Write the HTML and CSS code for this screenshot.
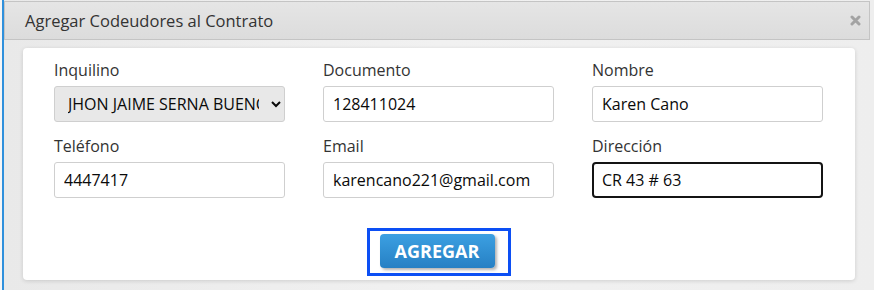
FILE: index.html
```html
<!DOCTYPE html>
<html lang="es">
<head>
    <meta charset="UTF-8">
    <meta name="viewport" content="width=device-width, initial-scale=1.0">
    <title>Agregar Codeudores</title>
    <link rel="stylesheet" href="styles.css">
</head>
<body>
    <div class="screen">
        <div class="dialog">
            <div class="dialog-header">
                <span class="dialog-title">Agregar Codeudores al Contrato</span>
                <span class="dialog-close">
                    <svg width="11" height="11" viewBox="0 0 11 11">
                        <path d="M2 2 L9 9 M9 2 L2 9" stroke="#a3a3a3" stroke-width="3" stroke-linecap="round"/>
                    </svg>
                </span>
            </div>

            <div class="dialog-body">
                <form class="card">
                    <div class="fields">
                        <div class="field">
                            <label>Inquilino</label>
                            <select class="control select">
                                <option>JHON JAIME SERNA BUENO</option>
                            </select>
                        </div>
                        <div class="field">
                            <label>Documento</label>
                            <input class="control" type="text" value="128411024">
                        </div>
                        <div class="field">
                            <label>Nombre</label>
                            <input class="control" type="text" value="Karen Cano">
                        </div>
                        <div class="field">
                            <label>Teléfono</label>
                            <input class="control" type="text" value="4447417">
                        </div>
                        <div class="field">
                            <label>Email</label>
                            <input class="control" type="text" value="karencano221@gmail.com">
                        </div>
                        <div class="field">
                            <label>Dirección</label>
                            <input class="control focused" type="text" value="CR 43 # 63">
                        </div>
                    </div>

                    <div class="actions">
                        <div class="focus-ring">
                            <button type="button" class="btn-primary">AGREGAR</button>
                        </div>
                    </div>
                </form>
            </div>
        </div>
    </div>
</body>
</html>
```

FILE: styles.css
```css
* {
    margin: 0;
    padding: 0;
    box-sizing: border-box;
    font-family: 'Open Sans', 'DejaVu Sans', sans-serif;
}

body {
    background-color: #f6f6f6;
    overflow: hidden;
}

.screen {
    height: 290px;
    padding-left: 2px;
}

/* Dialog */
.dialog {
    height: 100%;
    border-left: 2px solid #2f90dc;
    background: linear-gradient(90deg, #e9e9e9, #f1f1f1 50%, #eeeeee);
    padding-top: 1px;
}

.dialog-header {
    height: 39px;
    margin-right: 4px;
    border: 1px solid #c4c4c4;
    background: linear-gradient(#e5e5e5, #dcdcdc);
    display: flex;
    align-items: center;
    justify-content: space-between;
    padding: 0 8px 0 20px;
}

.dialog-title {
    font-size: 16.5px;
    color: #333;
}

.dialog-close {
    display: flex;
}

.dialog-body {
    padding: 8px 19px 10px 19px;
}

.card {
    background: #fff;
    border-radius: 4px;
    box-shadow: 0 1px 4px rgba(0, 0, 0, 0.14);
    padding: 12px 32px 4px 31px;
}

.fields {
    display: grid;
    grid-template-columns: repeat(3, 1fr);
    column-gap: 38px;
    row-gap: 14px;
}

.field label {
    display: block;
    font-size: 16px;
    line-height: 20px;
    color: #333;
    margin-bottom: 6px;
}

.control {
    display: block;
    width: 100%;
    height: 36px;
    border: 1px solid #cfcfcf;
    border-radius: 3px;
    padding: 0 9px;
    font-size: 16px;
    color: #0a0a0a;
    background: #fff;
    outline: none;
}

.select {
    background: #e8e8e8;
    padding: 0 9px;
    text-transform: uppercase;
}

.control.focused {
    border: 2px solid #141414;
    border-radius: 4px;
    padding: 0 8px;
}

/* Button */
.actions {
    display: flex;
    justify-content: center;
    margin-top: 30px;
}

.focus-ring {
    border: 3px solid #0c4ff4;
    padding: 3px 13px 5px 10px;
}

.btn-primary {
    display: block;
    width: 115px;
    height: 34px;
    border: 0;
    border-radius: 4px;
    background: linear-gradient(#3ca0e2, #2680c4);
    box-shadow: 2px 2px 3px rgba(0, 0, 0, 0.3);
    color: #fff;
    font-size: 18px;
    font-weight: 700;
}
```
